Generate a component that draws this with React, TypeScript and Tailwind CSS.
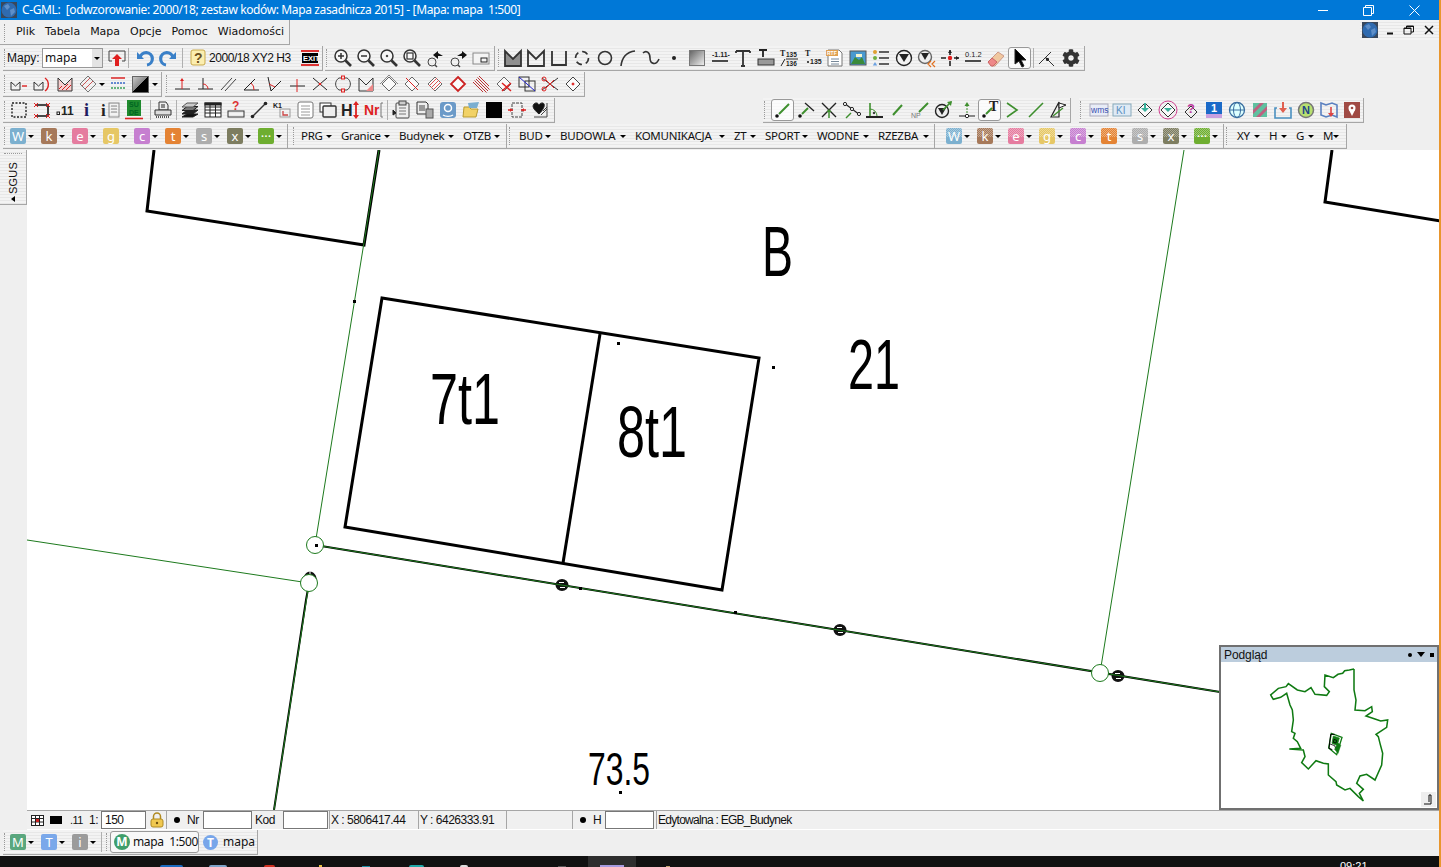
import React from "react";
import { FaCog } from "react-icons/fa";

type P = { children?: React.ReactNode };
const stripes = "bg-[repeating-linear-gradient(180deg,#f3f3f3_0px,#f3f3f3_2px,#e7e7e7_2px,#e7e7e7_3px)]";
const S = ({ children }: P) => (
  <svg className="overflow-visible" width={20} height={20} viewBox="0 0 20 20" fill="none" stroke="#222" strokeWidth={1}>{children}</svg>
);
const Ic = ({ children, sel, w }: P & { sel?: boolean; w?: string }) => (
  <div className={`flex items-center justify-center h-[22px] w-[23px] shrink-0 ${sel ? "bg-white/70 border border-[#999] rounded-[3px]" : ""} ${w ?? ""}`}>
    <S>{children}</S>
  </div>
);
const Grip = () => (
  <div className="w-[2px] h-[18px] ml-[1px] mr-[1px] shrink-0 border-l border-dotted border-[#999]" />
);
const Sep = () => <div className="w-[1px] h-[20px] bg-[#b0b0b0] shrink-0" />;
const Gap = ({ w }: { w: string }) => <div className={`shrink-0 ${w}`} />;
const Caret = () => (
  <span className="w-0 h-0 shrink-0 border-l-[3px] border-r-[3px] border-t-[3px] border-l-transparent border-r-transparent border-t-black" />
);
const Tb = ({ children, cls }: P & { cls: string }) => (
  <div className={`flex items-center h-[25px] border-r border-b border-[#a6a6a6] shrink-0 ${stripes} ${cls}`}>{children}</div>
);
const T = (p: { x: number; y: number; s: number; c?: string; b?: boolean; f?: string; children: string }) => (
  <text x={p.x} y={p.y} fontSize={p.s} fill={p.c ?? "#222"} stroke="none" fontWeight={p.b ? 700 : 400} fontFamily={p.f ?? "Liberation Sans, sans-serif"}>{p.children}</text>
);
const Mag = ({ children }: P) => (
  <g stroke="#333">
    <circle cx={8} cy={8} r={6} strokeWidth={1.5} fill="#f7f7f7" />
    <path d="M12.5 12.5L18 18" strokeWidth={2.6} />
    {children}
  </g>
);
const Mini = ({ flip }: { flip?: boolean }) => (
  <g>
    <circle cx={7} cy={14} r={4} stroke="#444" />
    <path d="M10 17l2 2" stroke="#444" strokeWidth={1.5} />
    <path d={flip ? "M9 8L14 5V3l5 4-5 4V8z" : "M18 8l-5-3V3L8 7l5 4V8z"} fill="#111" stroke="none" />
  </g>
);
const Gdot = <circle cx={4} cy={16} r={1.8} fill="#111" stroke="none" />;
const Gl = (d: string, w = 1.6) => <path d={d} stroke="#3e8f2e" strokeWidth={w} />;
const Dia = ({ children, c = "#444" }: P & { c?: string }) => (
  <g><path d="M10 3l7 7-7 7-7-7z" stroke={c} fill="#fafafa" />{children}</g>
);
const Mshape = (f: string) => <path d="M2 18V3l8 8 8-8v15z" fill={f} stroke="#333" strokeWidth={1.8} />;

const row2a = [
  <g><path d="M5 13H2V3h16v10h-3" stroke="#444" /><path d="M10 6l5 5h-3v7H8v-7H5z" fill="#e02020" stroke="none" /></g>,
];
const undo = (
  <g><path d="M5 10a6.2 6.2 0 1 1 7 7" stroke="#3a80c8" strokeWidth={3.2} /><path d="M2 4l7 7H2z" fill="#3a80c8" stroke="none" /></g>
);
const zooms = [
  <Mag><path d="M5 8h6M8 5v6" strokeWidth={1.5} /></Mag>,
  <Mag><path d="M5 8h6" strokeWidth={1.5} /></Mag>,
  <Mag><circle cx={8} cy={8} r={0.8} fill="#333" /></Mag>,
  <Mag><rect x={5} y={5} width={6} height={6} strokeWidth={1.2} /></Mag>,
  <Mini />,
  <Mini flip />,
  <g><rect x={2} y={5} width={16} height={11} stroke="#888" fill="#f4f4f4" /><rect x={10} y={10} width={6} height={4} stroke="#222" /></g>,
];
const draw = [
  <g>{Mshape("#8f8f8f")}</g>,
  <g>{Mshape("none")}</g>,
  <path d="M3 3v14h14V3" strokeWidth={1.8} stroke="#333" />,
  <circle cx={10} cy={10} r={6.5} strokeWidth={1.6} strokeDasharray="6 4" stroke="#333" />,
  <circle cx={10} cy={10} r={6.5} strokeWidth={1.6} stroke="#333" />,
  <path d="M3 18C4 9 9 4 17 3" strokeWidth={1.6} stroke="#333" />,
  <path d="M2 5c3-3 7-1 7 5s6 8 9 1" strokeWidth={1.6} stroke="#333" />,
  <circle cx={10} cy={10} r={2} fill="#222" stroke="none" />,
];
const draw2 = [
  <g><T x={2} y={9} s={7} b>-1.11-</T><path d="M2 13h16" strokeWidth={1.6} /></g>,
  <path d="M3 3h14M10 3v15M3 3v2M17 3v2M8 18h4" strokeWidth={1.8} stroke="#333" />,
  <g><path d="M3 2h8M7 2v7" strokeWidth={1.8} /><rect x={2} y={11} width={16} height={6} fill="#999" stroke="#333" /></g>,
  <g><T x={1} y={8} s={8} b f="Liberation Serif">T</T><T x={7} y={9} s={6.5} b>135</T><path d="M7 11h12M2 18l4-7" /><T x={7} y={18} s={6.5} b>136</T></g>,
  <g><T x={3} y={8} s={8} b f="Liberation Serif">T</T><circle cx={6} cy={14} r={1.1} fill="#222" stroke="none" /><T x={8} y={16} s={7} b>135</T></g>,
  <g><path d="M3 2h11l3 3v13H3z" fill="#fff" stroke="#777" /><rect x={1} y={2} width={12} height={6} fill="#e0a050" stroke="none" /><T x={2} y={7} s={5} c="#fff" b>RTF</T><path d="M6 11h8M6 13.5h8M6 16h8" stroke="#789" /></g>,
  <g><rect x={2} y={3} width={16} height={14} fill="#4a9ad0" stroke="#555" /><path d="M3 16l4-7 4 3 3-3 3 7z" fill="#3a8a3a" stroke="none" /><path d="M8 6h6v3H8z" fill="#f4f4d0" stroke="none" /></g>,
  <g><path d="M8 4h10M8 10h10M8 16h10" stroke="#333" strokeWidth={1.4} /><circle cx={4} cy={4} r={2} fill="#e0a030" stroke="none" /><circle cx={4} cy={10} r={2} fill="#70b040" stroke="none" /><path d="M4 14l2.2 3.6H1.8z" fill="#6aa0e0" stroke="none" /></g>,
  <g><circle cx={10} cy={10} r={7.5} strokeWidth={1.4} fill="#f3f3f3" /><path d="M5 6h10l-5 8z" fill="#222" stroke="none" /></g>,
  <g><circle cx={8} cy={9} r={6.5} strokeWidth={1.4} stroke="#666" fill="#eee" /><path d="M4 5h8l-4 7z" fill="#222" stroke="none" /><path d="M18 13l-3 3 3 3M14 13l-3 3 3 3" stroke="#e07020" strokeWidth={1.2} /></g>,
  <g><path d="M1 10h5M14 10h5M10 2v5M10 13v5" stroke="#222" strokeWidth={1.6} /><path d="M10 2l-2 3h4zM19 10l-3-2v4z" fill="#222" stroke="none" /><circle cx={10} cy={10} r={2.2} fill="#e02020" stroke="none" /></g>,
  <g><T x={2} y={9} s={7.5}>0.1.2</T><path d="M2 13h16" strokeWidth={1.6} /></g>,
  <g><path d="M2 14L12 4l6 4-9 10H6z" fill="#f0c8a0" stroke="#c98" /><path d="M2 14l4-4 5 4-4 4H5z" fill="#e88" stroke="#c66" /></g>,
];
const r3a = [
  <g><path d="M2 8v8h9V8l-4.5 4z" stroke="#333" /><path d="M13 12h5" stroke="#d22" strokeWidth={1.4} /></g>,
  <g><path d="M2 8v8h9V8l-4.5 4z" stroke="#333" /><path d="M13 4a8 8 0 0 1 0 13" stroke="#d22" strokeWidth={1.4} /></g>,
  <g><path d="M3 4v13h14V4l-7 7z" stroke="#333" fill="#f6d0d0" /><path d="M4 15l3-3M7 16l6-6M11 16l5-5" stroke="#c22" /></g>,
];
const r3b = [
  <g><path d="M2 10L10 2l8 8-8 8z" stroke="#777" /><path d="M4 12l8-8M7 15l8-8" stroke="#c55" /></g>,
];
const r3c = [
  <g><path d="M3 15h15" /><path d="M10 15V6" stroke="#d22" /><path d="M10 4l-2 3h4z" fill="#d22" stroke="none" /></g>,
  <g><path d="M3 15h15M8 15V4" /><path d="M8 10a5 5 0 0 1 5 5" stroke="#d22" /></g>,
  <path d="M3 16L14 4M7 17L18 5" stroke="#444" />,
  <g><path d="M3 16h15M3 16L14 5" /><path d="M10 9a8 8 0 0 1 3 7" stroke="#d22" /></g>,
  <g><path d="M4 3l3 14L17 7" /><path d="M5 10l6 3" stroke="#d22" /></g>,
  <g><path d="M3 12h15" /><path d="M10 5v13" stroke="#d22" /></g>,
  <g><path d="M3 4l14 12M3 16L17 4" /><circle cx={10} cy={10} r={1.3} fill="#d22" stroke="none" /></g>,
  <g><path d="M6 4a7 7 0 0 0 0 12M14 4a7 7 0 0 1 0 12M6 4h8M6 16h8" stroke="#444" /><rect x={8.500} y={2} width={3} height={3} fill="#fdd" stroke="#d22" /><rect x={8.500} y={15} width={3} height={3} fill="#fdd" stroke="#d22" /></g>,
  <g><path d="M3 4v13h14V4l-7 7z" stroke="#333" /><path d="M10 17l7-7v7z" fill="#e88" stroke="none" /></g>,
  <g><Dia c="#666" /><path d="M1 10L10 1l9 9" stroke="#888" /></g>,
  <Dia c="#666"><path d="M4 4l12 12" stroke="#d22" /></Dia>,
  <g><Dia c="#666" /><path d="M4 12l8-8M6 14l8-8M8 16l8-8" stroke="#d55" /></g>,
  <Dia c="#c22"><path d="M10 3l7 7-7 7-7-7z" stroke="#c22" strokeWidth={1.8} /></Dia>,
  <path d="M2 8l10 10M3.500 6.500l12 12M5 5l12 12M6.500 3.500l12 12M8 2l10 10" stroke="#b33" strokeWidth={1} />,
  <g><Dia c="#666" /><path d="M8 9l9 8M17 9l-9 8" stroke="#d22" strokeWidth={1.5} /></g>,
  <g><rect x={2} y={3} width={10} height={10} stroke="#333" /><rect x={8} y={7} width={10} height={10} stroke="#333" fill="none" /><path d="M2 3l16 14" stroke="#22c" /></g>,
  <g><path d="M2 4l16 12M2 16l16-12" stroke="#333" /><circle cx={4} cy={5} r={2} stroke="#d22" /><circle cx={4} cy={15} r={2} stroke="#d22" /><path d="M6 6l8 8M6 14l8-8" stroke="#d22" /></g>,
  <Dia c="#444"><circle cx={10} cy={10} r={1} fill="#d22" stroke="#d22" /></Dia>,
];
const r4a = [
  <rect x={3} y={3} width={14} height={14} strokeDasharray="2 1.5" strokeWidth={1.4} />,
  <g><path d="M4 5h12v11H4" stroke="#111" strokeWidth={1.6} /><path d="M2 3l4 4M6 3L2 7M14 3l4 4M18 3l-4 4M2 14l4 4M6 14l-4 4M14 14l4 4M18 14l-4 4" stroke="#d22" /></g>,
  <g><rect x={2} y={12} width={2.500} height={2.500} stroke="#222" /><T x={6} y={15} s={12} b>11</T></g>,
  <T x={6} y={16} s={18} b c="#201a60" f="Liberation Serif">i</T>,
  <g><T x={0} y={16} s={17} b f="Liberation Serif">i</T><rect x={8} y={3} width={10} height={14} stroke="#888" /><path d="M10 6h6M10 9h6M10 12h6" stroke="#888" /></g>,
  <g><rect x={3} y={0} width={14} height={16} fill="#1f8a2e" stroke="none" /><T x={5} y={7} s={7} b c="#062">SU</T><T x={5} y={15} s={7} b c="#062">DE</T><path d="M1 18.500h18" stroke="#d22" strokeWidth={1.6} /></g>,
];
const printer = <g><path d="M6 2h7l2 3v5H6z" fill="#eee" stroke="#333" /><path d="M2 10h16v5H2z" fill="#ddd" stroke="#333" /><path d="M3 17h14" stroke="#555" strokeWidth={2} strokeDasharray="1 1" /><path d="M8 5h4M8 7h4" /></g>;
const r4b = [
  <g><path d="M2 14l5-4h11l-5 4z" fill="#222" /><path d="M2 10.500l5-4h11l-5 4z" fill="#777" /><path d="M2 7l5-4h11l-5 4z" fill="#ccc" stroke="#555" /><path d="M2 17l5-3h11l-5 3z" fill="#111" /></g>,
  <g><rect x={2} y={3} width={16} height={14} fill="#fff" stroke="#222" /><path d="M2 7h16M2 10h16M2 13h16M7 3v14M12.500 3v14" stroke="#222" /><rect x={2} y={3} width={16} height={2} fill="#222" /></g>,
  <g><rect x={2} y={11} width={16} height={6} stroke="#333" /><T x={6} y={10} s={12} b c="#d33">?</T></g>,
  <g><path d="M3 17L17 3" stroke="#333" strokeWidth={1.4} /><circle cx={3.500} cy={16.500} r={1.8} fill="#222" stroke="none" /><circle cx={16.500} cy={3.500} r={1.8} fill="#222" stroke="none" /></g>,
  <g><T x={1} y={8} s={7} b>K1</T><rect x={8} y={9} width={10} height={8} stroke="#999" /><path d="M11 11v4h5" stroke="#c44" strokeWidth={1.3} /></g>,
  <g><rect x={3} y={2} width={15} height={16} rx={2} stroke="#777" fill="#fff" /><path d="M6 6h9M6 9h9M6 12h9M6 15h9" stroke="#999" /></g>,
  <g><rect x={2} y={3} width={11} height={9} fill="#fff" stroke="#333" /><rect x={5} y={6} width={13} height={11} rx={1} fill="#eee" stroke="#333" strokeWidth={1.4} /></g>,
  <g><T x={0} y={16} s={16} b>H</T><path d="M15 4v12" stroke="#d22" strokeWidth={1.8} /><path d="M15 1l-3 4h6zM15 19l-3-4h6z" fill="#d22" stroke="none" /></g>,
  <g><T x={0} y={15} s={14} b c="#d22">Nr</T><path d="M19 3h-2v14h2" stroke="#777" /></g>,
];
const r4c = [
  <g><rect x={4} y={3} width={13} height={15} rx={1} stroke="#444" fill="#eee" /><rect x={7} y={1} width={7} height={4} fill="#ccc" stroke="#444" /><path d="M7 8h7M7 11h7M7 14h7" stroke="#777" /><path d="M1 10l3 3-3 2z" fill="#222" /></g>,
  <g><path d="M2 2h9l2 2v10H2z" fill="#eee" stroke="#333" /><path d="M4 6h6M4 8h6M4 10h6" stroke="#444" /><rect x={11} y={9} width={7} height={9} fill="#aaa" stroke="#555" /></g>,
  <g><rect x={2} y={2} width={16} height={16} rx={3} fill="#6b9ac8" stroke="none" /><circle cx={10} cy={8} r={3.500} stroke="#fff" strokeWidth={1.5} /><path d="M5 15a6 3 0 0 0 10 0" stroke="#fff" strokeWidth={1.4} /></g>,
  <g><path d="M2 17l1-10h5l2 2h7l-2 8z" fill="#f2d266" stroke="#b89a30" /><path d="M7 3l11-1-2 6H8z" fill="#7aaed0" stroke="none" /></g>,
  <rect x={2} y={2} width={16} height={16} fill="#000" stroke="none" />,
  <g><rect x={5} y={3} width={10} height={14} stroke="#444" strokeDasharray="3 1" /><path d="M1 10h5M14 10h5" stroke="#d22" strokeWidth={1.3} /><path d="M5 10l-2-2v4zM15 10l2-2v4z" fill="#d22" stroke="none" /></g>,
  <g><path d="M9 14C3 9 2 6 4 4c2-2 4-1 5 1 1-2 4-3 5-1s-1 6-5 10z" fill="#111" /><path d="M17 3v14H4M13 11l4-4M11 15l6-6" stroke="#444" /></g>,
];
const rGreen = [
  <g>{Gdot}{Gl("M6 14L16 4", 2)}</g>,
  <g>{Gdot}{Gl("M6 14l6-6", 2)}<path d="M9 3l9 8" stroke="#222" strokeWidth={1.4} /></g>,
  <g><path d="M3 3l14 14M17 3L3 17" strokeWidth={1.4} />{Gl("M10 18v-7", 1.5)}<path d="M10 9l-2.500 3h5z" fill="#3e8f2e" stroke="none" /></g>,
  <g><path d="M2 3l16 12" strokeWidth={1.1} /><circle cx={3} cy={4} r={1.6} fill="#fff" /><circle cx={10} cy={9} r={1.6} fill="#fff" /><circle cx={17} cy={14} r={1.6} fill="#fff" />{Gl("M4 18l5-5", 1.5)}</g>,
  <g><path d="M1 17h17" strokeWidth={2} /><path d="M5 16V3" stroke="#3e8f2e" strokeWidth={1.6} /><path d="M5 9a7 7 0 0 1 7 7" stroke="#3e8f2e" /><circle cx={9} cy={13} r={0.8} fill="#3e8f2e" /></g>,
  <g>{Gl("M5 15L14 5", 2)}</g>,
  <g>{Gl("M8 12L17 3", 2)}<T x={0} y={18} s={7} c="#777">NP</T></g>,
  <g><circle cx={8} cy={11} r={6.500} strokeWidth={1.4} fill="#eee" /><path d="M4 8h8l-4 7z" fill="#222" stroke="none" />{Gl("M9 10l8-8", 1.7)}<path d="M18 1l-5 1 4 4z" fill="#3e8f2e" stroke="none" /></g>,
  <g><path d="M2 16h16" /><circle cx={10} cy={16} r={1.7} fill="#fff" /><path d="M10 13V5" stroke="#3e8f2e" strokeDasharray="2 1" /><path d="M10 2l-2.500 4h5z" fill="#3e8f2e" stroke="none" /></g>,
  <g>{Gdot}{Gl("M6 14l6-6", 2)}<T x={9} y={11} s={14} b f="Liberation Serif">T</T></g>,
  <path d="M4 3l10 7-10 7" stroke="#3e8f2e" strokeWidth={1.6} />,
  <path d="M3 17L17 3" stroke="#3e8f2e" strokeWidth={1.6} />,
  <g><path d="M10 2v15H2z" stroke="#222" strokeWidth={1.2} />{Gl("M4 16l10-8", 1.5)}<path d="M10 3l7 2-7 3z" fill="#fff" stroke="#222" /></g>,
];
const rWms = [
  <g><rect x={1} y={4} width={18} height={12} fill="#e8ecf7" stroke="#aab" /><T x={2} y={13} s={8.500} c="#3a4fb0">wms</T></g>,
  <g><rect x={1} y={4} width={18} height={12} fill="#dfeaf5" stroke="#8ab" /><T x={4} y={14} s={10} c="#5a90c0">KI</T></g>,
  <Dia c="#333"><path d="M10 3v6" stroke="#3ab09a" strokeWidth={2} /><path d="M6 8h8l-4 4z" fill="#3ab09a" stroke="none" /></Dia>,
  <g><circle cx={10} cy={10} r={9} stroke="#d04090" /><Dia c="#333"><path d="M6 8h8l-4 4z" fill="#3ab09a" stroke="none" /></Dia></g>,
  <g><path d="M10 6l6 6-6 6-6-6z" stroke="#333" /><T x={6} y={13} s={13} b c="#c040a0">?</T></g>,
  <g><rect x={2} y={2} width={16} height={12} fill="#1a6ac8" stroke="none" /><rect x={2} y={14} width={16} height={4} fill="#c8a0e0" stroke="none" /><T x={7} y={12} s={11} b c="#fff">1</T></g>,
  <g><circle cx={10} cy={10} r={7.500} stroke="#3a6ea0" strokeWidth={1.3} fill="#dff" /><ellipse cx={10} cy={10} rx={3.500} ry={7.500} stroke="#3a6ea0" /><path d="M2.500 10h15" stroke="#3a6ea0" /></g>,
  <g><rect x={3} y={3} width={14} height={14} fill="#60c0a0" stroke="none" /><path d="M3 10l7-7h4L3 14zM6 17L17 6v4l-7 7z" fill="#c06080" stroke="none" /></g>,
  <g><path d="M4 8H2v10h16V8h-2" stroke="#4a90c0" strokeWidth={1.6} /><path d="M10 2v8" stroke="#e06050" strokeWidth={2} /><path d="M6 8h8l-4 5z" fill="#e06050" stroke="none" /></g>,
  <g><circle cx={10} cy={10} r={7.500} stroke="#777" strokeWidth={1.5} fill="#b8e070" /><T x={6} y={14} s={11} b c="#248">N</T></g>,
  <g><path d="M2 3l5 2 6-2 5 2v12l-5-2-6 2-5-2z" stroke="#5a80c0" strokeWidth={1.6} /><path d="M12 7v7" stroke="#d44" strokeWidth={1.6} /><path d="M9 13h6l-3 4z" fill="#d44" stroke="none" /></g>,
  <g><rect x={2} y={2} width={16} height={16} fill="#a04a44" stroke="none" /><circle cx={10} cy={8} r={3.500} fill="#fff" stroke="none" /><path d="M7 10l3 6 3-6z" fill="#fff" stroke="none" /><circle cx={10} cy={8} r={1.300} fill="#a04a44" stroke="none" /></g>,
];

const letters: [string, string][] = [
  ["W", "bg-[#7cb0cf]"], ["k", "bg-[#a6795a]"], ["e", "bg-[#e57c9f]"], ["g", "bg-[#e6c765]"], ["c", "bg-[#c67fd0]"],
  ["t", "bg-[#e48334]"], ["s", "bg-[#adadad]"], ["x", "bg-[#7d7d60]"], ["···", "bg-[#6eae30]"],
];
const Letter = ({ l, c, tex }: { l: string; c: string; tex?: boolean }) => (
  <div className={`relative w-[16px] h-[16px] shrink-0 flex items-center justify-center text-white text-[13px] leading-none rounded-[2px] ${c} font-['Noto_Sans',sans-serif]`}>
    {tex ? <div className="absolute left-0 right-0 top-0 h-[9px] rounded-t-[2px] bg-[repeating-conic-gradient(#ffffff55_0_25%,#0000_0_50%)] bg-[length:2px_2px]" /> : null}
    <span className="relative">{l}</span>
  </div>
);
const LetterItem = (p: { l: string; c: string; tex?: boolean }) => (
  <div className="flex items-center w-[31px] shrink-0">
    <Letter {...p} />
    <span className="ml-[2px] flex"><Caret /></span>
  </div>
);
const Drop = ({ t, w }: { t: string; w: string }) => (
  <div className={`flex items-center shrink-0 ${w}`}>
    <span className="whitespace-nowrap text-[11.5px] tracking-[-0.25px]">{t}</span>
    <span className="ml-auto mr-[9px] flex"><Caret /></span>
  </div>
);
const Globe = ({ cls }: { cls: string }) => (
  <svg className={cls} width={16} height={16} viewBox="0 0 16 16">
    <rect width={16} height={16} fill="#39485c" />
    <circle cx={8} cy={8} r={7.500} fill="#2f6bb0" />
    <path d="M3 4l4-2 2 3-3 3zM9 8l4-2 1 4-4 4z" fill="#5f8fc8" />
  </svg>
);
const Input = ({ w, v }: { w: string; v?: string }) => (
  <div className={`h-[18px] ${w} shrink-0 bg-white border border-[#777] pl-[3px] text-[12px] leading-[16px]`}>{v}</div>
);
const Cell = ({ w, children }: P & { w: string }) => (
  <div className={`flex items-center h-full shrink-0 border-r border-[#a6a6a6] ${w}`}>{children}</div>
);

const outline =
  "432,87 418,90 404,92 398,100 384,103 370,113 345,105 343,140 358,155 350,166 315,163 303,143 285,155 262,150 235,131 228,140 205,145 182,165 190,178 212,172 230,160 240,195 247,210 250,240 245,275 255,280 250,295 262,305 272,325 238,327 280,330 285,350 275,368 295,387 318,362 340,370 355,372 355,405 378,425 380,435 405,450 420,445 445,470 460,483 448,460 460,448 440,430 450,408 470,403 495,420 515,375 518,340 510,310 505,290 498,283 515,272 530,262 533,240 512,243 495,237 468,228 487,215 485,200 465,212 435,210 438,180 432,150 432,87";

function MapCanvas() {
  const txt = "Liberation Sans, sans-serif";
  const Label = (p: { x: number; y: number; w: number; s: number; t: string }) => (
    <text x={p.x} y={p.y} fontSize={p.s} textLength={p.w} lengthAdjust="spacingAndGlyphs" fontFamily={txt} fill="#000">{p.t}</text>
  );
  const Sym = (p: { x: number; y: number }) => (
    <g>
      <ellipse cx={p.x} cy={p.y} rx={6.500} ry={6} fill="#111" />
      <path d={`M${p.x - 3} ${p.y - 2.5}h5M${p.x - 2} ${p.y + 2.5}h5`} stroke="#fff" strokeWidth={1} />
    </g>
  );
  return (
    <svg className="absolute inset-0" width={1414} height={660} viewBox="27 150 1414 660">
      <g fill="none" stroke="#000" strokeWidth={3}>
        <path d="M154 150L147 211L364 245L379 150" />
        <path d="M1332 150L1325 202L1441 221" />
        <path d="M382 298L759 358L722 590L345 527Z" />
        <path d="M600 334L563 563" />
      </g>
      <path d="M379 150L364 245" stroke="#000" strokeWidth={1.2} />
      <path d="M310 578L306 600L274 810M315 545L1220 692" stroke="#000" strokeWidth={2} fill="none" />
      <Sym x={562} y={585} />
      <Sym x={840} y={630} />
      <Sym x={1118} y={676} />
      <path d="M303 582c0-14 14-14 14 0z" fill="#111" />
      <path d="M310 570v8" stroke="#fff" strokeWidth={1} />
      <g fill="none" stroke="#1d7a1d" strokeWidth={1}>
        <path d="M379 150L315 545" />
        <path d="M27 540L309 583" />
        <path d="M315 545L1220 692" />
        <path d="M1184 150L1100 673" />
        <path d="M309 583L274 810" />
      </g>
      <g fill="#fff" stroke="#1d7a1d" strokeWidth={1}>
        <circle cx={315} cy={545} r={8.500} />
        <circle cx={309} cy={583} r={8.500} />
        <circle cx={1100} cy={673} r={8.500} />
      </g>
      <g fill="#000">
        <rect x={315} y={544} width={3} height={3} />
        <rect x={353} y={300} width={3} height={3} />
        <rect x={617} y={342} width={3} height={3} />
        <rect x={772} y={366} width={3} height={3} />
        <rect x={579} y={587} width={3} height={3} />
        <rect x={734} y={611} width={3} height={3} />
        <rect x={619} y={791} width={3} height={3} />
      </g>
      <Label x={762} y={276} w={31} s={71} t="B" />
      <Label x={848} y={389} w={52} s={71} t="21" />
      <Label x={430} y={424} w={70} s={73} t="7t1" />
      <Label x={617} y={457} w={70} s={73} t="8t1" />
      <Label x={588} y={785} w={62} s={47} t="73.5" />
    </svg>
  );
}

function Preview() {
  return (
    <div className="absolute left-[1192px] top-[495px] w-[220px] h-[165px] bg-white border-2 border-[#707070] flex flex-col">
      <div className="h-[15px] shrink-0 bg-[#bccddd] flex items-center pl-[3px] text-[12px] leading-none font-['Liberation_Sans',sans-serif] tracking-[-0.1px]">
        <span>Podgląd</span>
        <span className="ml-auto flex items-center gap-[5px] pr-[3px]">
          <span className="w-[4px] h-[4px] rounded-full bg-black" />
          <span className="w-0 h-0 border-l-[4px] border-r-[4px] border-t-[5px] border-l-transparent border-r-transparent border-t-black" />
          <span className="w-[4px] h-[4px] bg-black" />
        </span>
      </div>
      <div className="relative flex-1">
        <svg className="absolute left-0 top-0" width={216} height={148} viewBox="33 66 648 444">
          <polyline points={outline} fill="none" stroke="#0f7a12" strokeWidth={4.6} />
          <path d="M364 280l-8 44 24 20 16-52z" fill="none" stroke="#0f7a12" strokeWidth={4} />
          <path d="M362 283l-5 42 10 4M362 283h12" fill="none" stroke="#000" strokeWidth={3} />
          <path d="M370 288l18 6-4 14 8 8-8 24-10-12 6-12-14-6z" fill="#0f7a12" stroke="#0f7a12" strokeWidth={2} />
          <path d="M372 298l8 3-2 8-8-2zM360 312l14 5 2 6" fill="none" stroke="#000" strokeWidth={2.4} />
        </svg>
        <div className="absolute right-[1px] bottom-[1px] w-[15px] h-[15px] bg-[#eeeeee] flex items-end justify-end pr-[3px] pb-[2px]">
          <svg width={9} height={11} viewBox="0 0 9 11"><path d="M0 10H7V1H5V8" fill="none" stroke="#111" strokeWidth={1} /></svg>
        </div>
      </div>
    </div>
  );
}

export default function App() {
  return (
    <div className="relative flex w-[1441px] h-[867px] overflow-hidden bg-[#efefef] text-[#111] font-['Noto_Sans',sans-serif]">
      <div className="flex flex-col w-[1439px] shrink-0">
        {/* title bar */}
        <div className="flex items-center h-[20px] shrink-0 bg-[#0078d7] text-white text-[12px] leading-none">
          <Globe cls="ml-[1px] shrink-0" />
          <span className="ml-[5px] whitespace-pre tracking-[-0.38px]">C-GML:  [odwzorowanie: 2000/18; zestaw kodów: Mapa zasadnicza 2015] - [Mapa: mapa  1:500]</span>
          <svg className="ml-auto mr-[35px]" width={10} height={10} viewBox="0 0 10 10"><path d="M0 5.500h10" stroke="#fff" /></svg>
          <svg className="mr-[35px]" width={11} height={11} viewBox="0 0 11 11"><path d="M.5 2.500h8v8h-8zM2.500 2.500v-2h8v8h-2" stroke="#fff" fill="none" /></svg>
          <svg className="mr-[19px]" width={11} height={11} viewBox="0 0 11 11"><path d="M.5.5l10 10M10.500.5l-10 10" stroke="#fff" /></svg>
        </div>
        {/* menu row */}
        <div className="flex h-[25px] shrink-0">
          <div className="flex items-center h-[25px] w-[290px] pl-[3px] pt-[1px] border-r border-b border-[#a6a6a6] bg-[#f0f0f0]">
            <Grip />
            <div className="flex items-center font-['DejaVu_Sans',sans-serif] text-[11px] ml-[9px] gap-[10px] tracking-[-0.02px]">
              <span>Plik</span><span>Tabela</span><span>Mapa</span><span>Opcje</span><span>Pomoc</span><span>Wiadomości</span>
            </div>
          </div>
          <div className={`ml-auto flex items-center h-[20px] w-[79px] ${stripes}`}>
            <Globe cls="ml-[2px] shrink-0" />
            <svg className="ml-[6px]" width={12} height={12} viewBox="0 0 12 12"><path d="M3 9.500h6" stroke="#111" strokeWidth={2} /></svg>
            <svg className="ml-[7px]" width={12} height={12} viewBox="0 0 12 12"><path d="M1 4h7v6H1zM3.500 4V2h7v6H8M1 4.500h7M3.500 2.500h7" stroke="#111" fill="none" /></svg>
            <svg className="ml-[9px]" width={10} height={10} viewBox="0 0 10 10"><path d="M1 1l8 8M9 1L1 9" stroke="#111" strokeWidth={1.5} /></svg>
          </div>
        </div>
        {/* row 2 */}
        <div className="flex items-start h-[27px] shrink-0 pt-[1px]">
          <Tb cls="ml-[3px] w-[320px]">
            <Grip />
            <span className="w-[35px] text-[12px] shrink-0 font-['Liberation_Sans',sans-serif]">Mapy:</span>
            <div className="flex items-center w-[61px] h-[20px] bg-white border border-[#999] shrink-0 text-[12px] pl-[2px]">
              <span>mapa</span>
              <span className="ml-auto flex items-center justify-center w-[10px] h-full bg-[#e4e4e4]"><Caret /></span>
            </div>
            <Gap w="w-[2px]" />
            <Ic>{row2a[0]}</Ic>
            <div className="w-[3px] flex shrink-0"><Sep /></div>
            <Gap w="w-[2px]" />
            <Ic>{undo}</Ic>
            <Ic><g transform="translate(20 0) scale(-1 1)">{undo}</g></Ic>
            <Gap w="w-[3px]" />
            <div className="w-[4px] flex shrink-0"><Sep /></div>
            <Ic><rect x={3} y={2} width={14} height={15} rx={2} fill="#fbeeb0" stroke="#c9a94a" /><T x={6} y={15} s={14} b c="#6a5020">?</T></Ic>
            <span className="w-[89px] shrink-0 text-[12px] whitespace-nowrap font-['Liberation_Sans',sans-serif] tracking-[-0.45px]">2000/18 XY2 H3</span>
            <Ic>
              <path d="M1 3h18M1 17h18" stroke="#d33" strokeWidth={2} />
              <rect x={2} y={5} width={16} height={10} fill="#000" stroke="none" />
              <T x={3} y={13} s={7.500} b c="#fff">EXIT</T>
            </Ic>
          </Tb>
          <Tb cls="ml-[2px] w-[170px]">
            <Grip />
            <Gap w="w-[2px]" />
            {zooms.map((z, i) => <Ic key={i}>{z}</Ic>)}
          </Tb>
          <Tb cls="ml-[2px] w-[588px]">
            <Grip />
            {draw.map((z, i) => <Ic key={i}>{z}</Ic>)}
            <div className="flex items-center justify-center h-[22px] w-[23px] shrink-0">
              <div className="w-[16px] h-[16px] border border-[#777] bg-[linear-gradient(135deg,#666,#eee)]" />
            </div>
            {draw2.map((z, i) => <Ic key={i}>{z}</Ic>)}
            <Gap w="w-[1px]" />
            <Ic sel><path d="M5 1v15l4-3 3 6 2-1-3-6h5z" fill="#000" /></Ic>
            <Gap w="w-[2px]" />
            <Sep />
            <Gap w="w-[1px]" />
            <Ic><path d="M2 16L14 4M8 9l9 9" stroke="#333" /><path d="M9 10l1 3 2-2z" fill="#333" /></Ic>
            <div className="flex items-center justify-center w-[25px] shrink-0"><FaCog size={18} color="#333" /></div>
          </Tb>
        </div>
        {/* row 3 */}
        <div className="flex items-start h-[26px] shrink-0">
          <Tb cls="ml-[3px] w-[159px]">
            <Grip />
            {r3a.map((z, i) => <Ic key={i}>{z}</Ic>)}
            <Ic>{r3b[0]}</Ic>
            <span className="flex mr-[1px]"><Caret /></span>
            <Ic><path d="M3 4h14" stroke="#d33" strokeWidth={1.6} /><path d="M3 9h14" stroke="#3a6ac8" strokeWidth={1.6} strokeDasharray="2 1" /><path d="M3 14h14" stroke="#3aa058" strokeWidth={1.6} strokeDasharray="2 1" /></Ic>
            <div className="flex items-center justify-center w-[23px] shrink-0">
              <div className="w-[17px] h-[17px] bg-[linear-gradient(135deg,#c8c8c8_0,#888_49%,#000_50%,#000_100%)] border border-[#666]" />
            </div>
            <span className="flex"><Caret /></span>
          </Tb>
          <Tb cls="ml-[3px] w-[420px]">
            <Grip />
            <Gap w="w-[1px]" />
            {r3c.map((z, i) => <Ic key={i}>{z}</Ic>)}
          </Tb>
        </div>
        {/* row 4 */}
        <div className="flex items-start h-[26px] shrink-0">
          <Tb cls="ml-[3px] w-[552px]">
            <Grip />
            {r4a.map((z, i) => <Ic key={i}>{z}</Ic>)}
            <Gap w="w-[5px]" />
            <Sep />
            <Ic>{printer}</Ic>
            <Gap w="w-[2px]" />
            <Sep />
            <Gap w="w-[1px]" />
            {r4b.map((z, i) => <Ic key={i}>{z}</Ic>)}
            <Gap w="w-[2px]" />
            <Sep />
            <Gap w="w-[2px]" />
            {r4c.map((z, i) => <Ic key={i}>{z}</Ic>)}
          </Tb>
          <Tb cls="ml-[208px] w-[308px]">
            <Grip />
            <Gap w="w-[4px]" />
            {rGreen.map((z, i) => <Ic key={i} sel={i === 0 || i === 9}>{z}</Ic>)}
          </Tb>
          <Tb cls="ml-[8px] w-[285px]">
            <Grip />
            <Gap w="w-[4px]" />
            {rWms.map((z, i) => <Ic key={i}>{z}</Ic>)}
          </Tb>
        </div>
        {/* row 5 */}
        <div className="flex items-start h-[26px] shrink-0">
          <Tb cls="ml-[3px] w-[285px]">
            <Grip />
            <Gap w="w-[3px]" />
            {letters.map(([l, c]) => <LetterItem key={l} l={l} c={c} />)}
          </Tb>
          <Tb cls="w-[219px]">
            <Gap w="w-[4px]" />
            <Grip />
            <Gap w="w-[5px]" />
            <Drop t="PRG" w="w-[40px]" />
            <Drop t="Granice" w="w-[58px]" />
            <Drop t="Budynek" w="w-[64px]" />
            <Drop t="OTZB" w="w-[46px]" />
          </Tb>
          <Tb cls="w-[428px]">
            <Gap w="w-[1px]" />
            <Grip />
            <Gap w="w-[7px]" />
            <Drop t="BUD" w="w-[41px]" />
            <Drop t="BUDOWLA" w="w-[75px]" />
            <Drop t="KOMUNIKACJA" w="w-[99px]" />
            <Drop t="ZT" w="w-[31px]" />
            <Drop t="SPORT" w="w-[52px]" />
            <Drop t="WODNE" w="w-[61px]" />
            <Drop t="RZEZBA" w="w-[60px]" />
          </Tb>
          <Tb cls="w-[289px]">
            <Gap w="w-[11px]" />
            {letters.map(([l, c]) => <LetterItem key={l} l={l} c={c} tex />)}
          </Tb>
          <Tb cls="w-[123px]">
            <Gap w="w-[1px]" />
            <Grip />
            <Gap w="w-[8px]" />
            <Drop t="XY" w="w-[32px]" />
            <Drop t="H" w="w-[27px]" />
            <Drop t="G" w="w-[27px]" />
            <Drop t="M" w="w-[24px]" />
          </Tb>
        </div>
        {/* body */}
        <div className="flex flex-1 min-h-0">
          <div className="w-[27px] shrink-0">
            <div className={`w-[27px] h-[55px] border-r border-b border-[#a6a6a6] flex flex-col items-center ${stripes}`}>
              <div className="w-[18px] h-[1px] mt-[3px] border-t border-dotted border-[#999]" />
              <span className="mt-[8px] text-[11px] leading-none rotate-180 [writing-mode:vertical-rl] tracking-[0.2px] font-['Liberation_Sans',sans-serif]">SGUS</span>
              <span className="mt-[2px] w-0 h-0 border-t-[3px] border-b-[3px] border-r-[4px] border-t-transparent border-b-transparent border-r-black" />
            </div>
          </div>
          <div className="flex flex-col flex-1 min-w-0">
            <div className="relative flex-1 bg-white overflow-hidden">
              <MapCanvas />
              <Preview />
            </div>
            {/* status bar */}
            <div className="flex items-center h-[20px] shrink-0 border-t border-[#a6a6a6] border-b border-b-white bg-[#f0f0f0] text-[12px] leading-none font-['Liberation_Sans',sans-serif] tracking-[-0.5px]">
              <Cell w="w-[140px]">
                <svg className="ml-[4px]" width={13} height={11} viewBox="0 0 13 11"><rect x={.5} y={.5} width={12} height={10} fill="#fff" stroke="#222" /><path d="M.5 3.500h12M.5 7h12M4.500.5v10M8.500.5v10" stroke="#222" /><rect x={5} y={4} width={3} height={3} fill="#c22" /></svg>
                <span className="ml-[6px] w-[12px] h-[8px] bg-black shrink-0" />
                <span className="ml-[8px] w-[12px] text-[11px]">.11</span>
                <span className="ml-[7px] w-[12px]">1:</span>
                <Input w="w-[45px]" v="150" />
                <svg className="ml-[4px]" width={14} height={16} viewBox="0 0 14 16"><path d="M3.500 7V4.500a3.500 3.500 0 0 1 7 0V7" stroke="#b08a20" strokeWidth={1.5} fill="none" /><rect x={1} y={7} width={12} height={8} rx={2} fill="#f0c850" stroke="#b08a20" /><circle cx={7} cy={11} r={1.200} fill="#705010" /></svg>
              </Cell>
              <Cell w="w-[163px]">
                <span className="ml-[7px] w-[6px] h-[6px] rounded-full bg-black shrink-0" />
                <span className="ml-[7px] w-[16px]">Nr</span>
                <Input w="w-[49px]" />
                <span className="ml-[3px] w-[28px]">Kod</span>
                <Input w="w-[45px]" />
              </Cell>
              <Cell w="w-[89px]"><span className="pl-[1px] whitespace-nowrap">X : 5806417.44</span></Cell>
              <Cell w="w-[88px]"><span className="pl-[1px] whitespace-nowrap">Y : 6426333.91</span></Cell>
              <Cell w="w-[66px]" />
              <Cell w="w-[84px]">
                <span className="ml-[7px] w-[6px] h-[6px] rounded-full bg-black shrink-0" />
                <span className="ml-[7px] w-[12px]">H</span>
                <Input w="w-[49px]" />
              </Cell>
              <span className="pl-[1px] whitespace-nowrap tracking-[-0.72px]">Edytowalna : EGB_Budynek</span>
            </div>
          </div>
        </div>
        {/* bottom tabs */}
        <div className="flex items-start h-[26px] shrink-0">
          <Tb cls="ml-[3px] w-[255px] text-[12px]">
            <Grip />
            <Gap w="w-[3px]" />
            <LetterItem l="M" c="bg-[#5aa77e]" />
            <LetterItem l="T" c="bg-[#7aa8ea]" />
            <div className="flex items-center w-[29px] shrink-0">
              <Letter l="i" c="bg-[#9b9b9b]" />
              <span className="ml-[2px] flex"><Caret /></span>
            </div>
            <Sep />
            <Gap w="w-[3px]" />
            <Grip />
            <Gap w="w-[1px]" />
            <div className="flex items-center h-[22px] w-[89px] shrink-0 bg-[#f8f8f8] border border-[#999] rounded-[3px] pl-[3px]">
              <span className="w-[16px] h-[16px] shrink-0 rounded-full bg-[#3f9e6a] text-white text-[12px] font-bold leading-[16px] text-center">M</span>
              <span className="ml-[3px] whitespace-pre tracking-[-0.35px]">mapa  1:500</span>
            </div>
            <div className="flex items-center pl-[4px]">
              <span className="w-[15px] h-[15px] shrink-0 rounded-full bg-[#78a6ea] text-white text-[12px] font-bold leading-[15px] text-center">T</span>
              <span className="ml-[5px]">mapa</span>
            </div>
          </Tb>
        </div>
        {/* desktop taskbar clipped at bottom of the shot */}
        <div className="flex h-[11px] shrink-0 bg-[#111] overflow-hidden items-end">
          <div className="ml-[160px] w-[23px] h-[2px] bg-[#1a6ac0] rounded-t" />
          <div className="ml-[26px] w-[18px] h-[2px] bg-[#7ea3c8] rounded-t" />
          <div className="ml-[37px] w-[11px] h-[2px] bg-[#d03020] rounded-t" />
          <div className="ml-[44px] w-[3px] h-[2px] bg-[#e8c040]" />
          <div className="ml-[40px] w-[8px] h-[1px] bg-[#1a8aa0]" />
          <div className="ml-[39px] w-[15px] h-[2px] bg-[#20a8a8] rounded-t" />
          <div className="ml-[36px] w-[8px] h-[2px] bg-[#ddd] rounded-t" />
          <div className="ml-[90px] w-[8px] h-[1px] bg-[#555]" />
          <div className="ml-[22px] flex items-end justify-center w-[48px] h-[11px] bg-[#2e2e2e]">
            <div className="w-[24px] h-[2px] bg-[#a79be0]" />
          </div>
          <div className="ml-[30px] w-[4px] h-[1px] bg-[#c0a070]" />
          <span className="ml-[670px] self-start pt-[5px] text-white text-[11px] leading-none font-['Liberation_Sans',sans-serif]">09:21</span>
        </div>
      </div>
      <div className="w-[2px] shrink-0 bg-[#e8962e]" />
    </div>
  );
}
